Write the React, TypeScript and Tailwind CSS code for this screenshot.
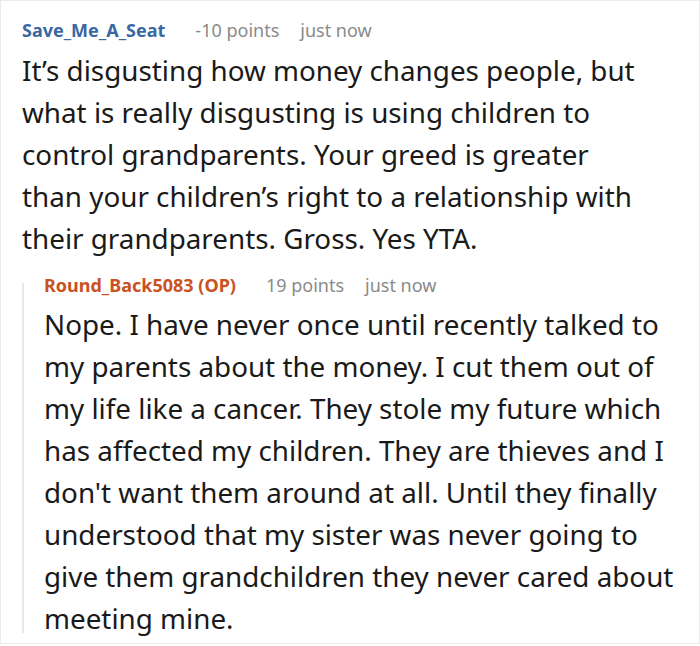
import React from 'react';

const font = { fontFamily: '"Noto Sans", "Open Sans", sans-serif' };

const CommentHeader: React.FC<{ author: string; points: string; color: string }> = ({ author, points, color }) => (
  <div className="flex items-center text-[18px] leading-6">
    <span className={`font-bold ${color}`}>{author}</span>
    <span className="ml-[30px] text-[#8a8a8a]">{points}</span>
    <span className="ml-[21px] text-[#8a8a8a]">just now</span>
  </div>
);

export default function App() {
  return (
    <div className="w-[700px] h-[644px] bg-white" style={font}>
      <div className="h-full border border-[#ebebeb] pl-[21px] pr-[20px] pt-[17px]">
        <CommentHeader author="Save_Me_A_Seat" points="-10 points" color="text-[#3a68a3]" />
        <p className="mt-[7px] mr-[34px] text-[27.8px] leading-[42px] text-[#1a1a1a]">
          It’s disgusting how money changes people, but what is really disgusting is using children to control grandparents. Your greed is greater than your children’s right to a relationship with their grandparents. Gross. Yes YTA.
        </p>
        <div className="mt-[14px] flex">
          <div className="mt-[10px] mb-[6px] w-[2px] bg-[#e8e8e8]" />
          <div className="ml-[20px] flex-1">
            <CommentHeader author="Round_Back5083 (OP)" points="19 points" color="text-[#c9521f]" />
            <p className="mt-[6px] text-[27.8px] leading-[42px] text-[#1a1a1a]">
              Nope. I have never once until recently talked to my parents about the money. I cut them out of my life like a cancer. They stole my future which has affected my children. They are thieves and I don't want them around at all. Until they finally understood that my sister was never going to give them grandchildren they never cared about meeting mine.
            </p>
          </div>
        </div>
      </div>
    </div>
  );
}
